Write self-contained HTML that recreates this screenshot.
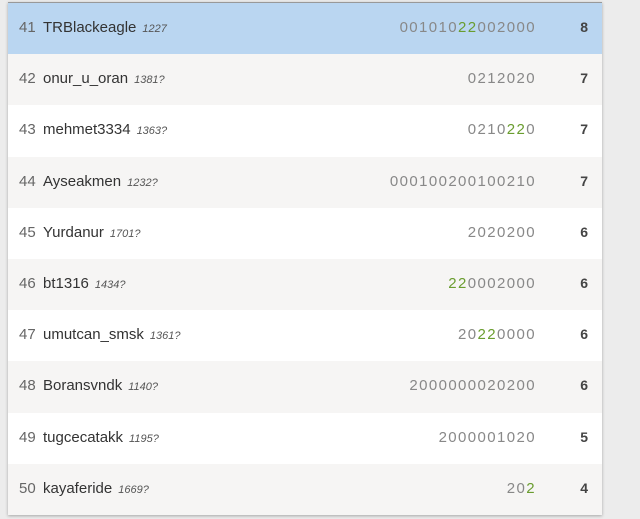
<!DOCTYPE html>
<html><head><style>
body{margin:0;width:640px;height:519px;background:#ececec;font-family:"Liberation Sans",sans-serif;overflow:hidden;position:relative}
.t{position:absolute;left:8px;top:2px;width:594px;box-shadow:0 1px 3px rgba(0,0,0,.3);border-top:1px solid #999}
.r{height:51.2px;position:relative;color:#444}
.r:nth-child(odd){background:#fff}.r:nth-child(even){background:#f6f5f4}
.r.h{background:#bad6f1}
.n{position:absolute;left:11px;top:16px;font-size:15px;color:#666}
.u{position:absolute;left:35px;top:16px;font-size:15px;color:#333}
.u i{font-size:11px;color:#555;margin-left:6px}
.d{position:absolute;right:66px;top:16px;font-size:15px;letter-spacing:1.4px;color:#888}
.d b{font-weight:normal;color:#6a9d2f}
.s{position:absolute;right:14px;top:16px;font-size:14px;font-weight:bold;color:#444}
</style></head><body>
<div class="t">
<div class="r h"><span class="n">41</span><span class="u">TRBlackeagle<i>1227</i></span><span class="d">001010<b>22</b>002000</span><span class="s">8</span></div>
<div class="r"><span class="n">42</span><span class="u">onur_u_oran<i>1381?</i></span><span class="d">0212020</span><span class="s">7</span></div>
<div class="r"><span class="n">43</span><span class="u">mehmet3334<i>1363?</i></span><span class="d">0210<b>22</b>0</span><span class="s">7</span></div>
<div class="r"><span class="n">44</span><span class="u">Ayseakmen<i>1232?</i></span><span class="d">000100200100210</span><span class="s">7</span></div>
<div class="r"><span class="n">45</span><span class="u">Yurdanur<i>1701?</i></span><span class="d">2020200</span><span class="s">6</span></div>
<div class="r"><span class="n">46</span><span class="u">bt1316<i>1434?</i></span><span class="d"><b>22</b>0002000</span><span class="s">6</span></div>
<div class="r"><span class="n">47</span><span class="u">umutcan_smsk<i>1361?</i></span><span class="d">20<b>22</b>0000</span><span class="s">6</span></div>
<div class="r"><span class="n">48</span><span class="u">Boransvndk<i>1140?</i></span><span class="d">2000000020200</span><span class="s">6</span></div>
<div class="r"><span class="n">49</span><span class="u">tugcecatakk<i>1195?</i></span><span class="d">2000001020</span><span class="s">5</span></div>
<div class="r"><span class="n">50</span><span class="u">kayaferide<i>1669?</i></span><span class="d">20<b>2</b></span><span class="s">4</span></div>
</div>
</body></html>
